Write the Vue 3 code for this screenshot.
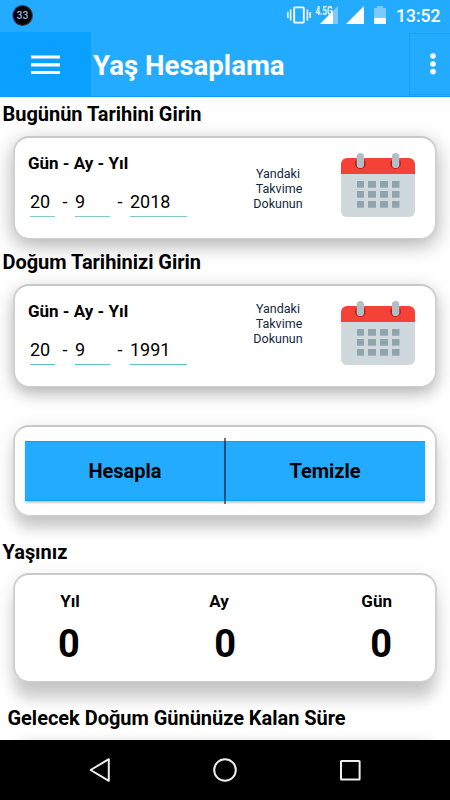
<script setup>
import { ref } from 'vue'

const dates = ref([
  { title: 'Bugünün Tarihini Girin', day: '20', month: '9', year: '2018', kind: 'today' },
  { title: 'Doğum Tarihinizi Girin', day: '20', month: '9', year: '1991', kind: 'birth' },
])

const age = ref([
  { label: 'Yıl', value: 0 },
  { label: 'Ay', value: 0 },
  { label: 'Gün', value: 0 },
])

const cols = [{ x: 16, w: 7 }, { x: 27, w: 8 }, { x: 39, w: 8 }, { x: 51, w: 7.5 }]
const rows = [28, 38, 48]

function clearAge() {
  age.value.forEach((a) => { a.value = 0 })
}
</script>

<template>
  <div class="screen">
    <header class="status">
      <span class="badge">33</span>
      <svg class="status-icons" width="104" height="30" viewBox="0 0 104 30">
        <!-- vibrate -->
        <rect x="8.2" y="7.3" width="9.6" height="15.4" rx="1" fill="none" stroke="#fff" stroke-width="1.8" />
        <path d="M4.6 9.5v11M1.8 12v6M21.4 9.5v11M24.2 12v6" stroke="#fff" stroke-width="1.6" />
        <!-- mobile signal -->
        <path d="M34 24L52 6v18z" fill="#7accff" />
        <path d="M34 24L47 11v13z" fill="#fff" />
        <text x="29.5" y="14.5" class="net" textLength="17" lengthAdjust="spacingAndGlyphs">4.5G</text>
        <path d="M60 24L78 6v18z" fill="#fff" />
        <!-- battery -->
        <path d="M88 8h3V6h6v2h3v10H88z" fill="#7accff" />
        <path d="M88 18h12v6H88z" fill="#fff" />
      </svg>
      <span class="clock">13:52</span>
    </header>

    <div class="toolbar">
      <button class="menu">
        <svg width="29" height="20" viewBox="0 0 29 20">
          <path d="M0 2h29M0 9.8h29M0 17.5h29" stroke="#fff" stroke-width="3.2" />
        </svg>
      </button>
      <h1>Yaş Hesaplama</h1>
      <button class="more">
        <svg width="6" height="22" viewBox="0 0 6 22" fill="#fff">
          <circle cx="3" cy="3" r="2.8" />
          <circle cx="3" cy="11" r="2.8" />
          <circle cx="3" cy="18.6" r="2.8" />
        </svg>
      </button>
    </div>

    <main class="content">
      <section v-for="d in dates" :key="d.kind" class="date-section" :class="d.kind">
        <h2>{{ d.title }}</h2>
        <div class="card date-card">
          <div class="fields">
            <h3>Gün - Ay - Yıl</h3>
            <div class="inputs">
              <span class="field day">{{ d.day }}</span>
              <span class="dash">-</span>
              <span class="field month">{{ d.month }}</span>
              <span class="dash">-</span>
              <span class="field year">{{ d.year }}</span>
            </div>
          </div>
          <p class="hint">Yandaki<br><span class="nudge">Takvime</span><br>Dokunun</p>
          <svg class="calendar" width="74" height="64" viewBox="0 0 74 64">
            <path d="M0 21h74v37a6 6 0 0 1-6 6H6a6 6 0 0 1-6-6z" fill="#cfd8dc" />
            <path d="M0 21V11a6 6 0 0 1 6-6h62a6 6 0 0 1 6 6v10z" fill="#f44336" />
            <circle cx="19.3" cy="10.5" r="5.4" fill="#b71c1c" />
            <circle cx="54.6" cy="10.5" r="5.4" fill="#b71c1c" />
            <rect x="15.7" y="0" width="7.3" height="15" rx="3.6" fill="#b0bec5" />
            <rect x="51" y="0" width="7.3" height="15" rx="3.6" fill="#b0bec5" />
            <template v-for="y in rows" :key="y">
              <rect v-for="c in cols" :key="c.x" :x="c.x" :y="y" :width="c.w" height="6.7" fill="#90a4ae" />
            </template>
          </svg>
        </div>
      </section>

      <div class="card actions">
        <button>Hesapla</button>
        <i class="divider"></i>
        <button @click="clearAge">Temizle</button>
      </div>

      <h2 class="age-title">Yaşınız</h2>
      <div class="card age-card">
        <div v-for="a in age" :key="a.label" class="age-col">
          <span class="age-label">{{ a.label }}</span>
          <span class="age-value">{{ a.value }}</span>
        </div>
      </div>

      <h2 class="next-title">Gelecek Doğum Gününüze Kalan Süre</h2>
      <div class="card next-card"></div>
    </main>

    <nav class="navbar">
      <svg width="24" height="26" viewBox="0 0 24 26"><path d="M20.8 2.2v21.6L2.6 13z" /></svg>
      <svg width="26" height="26" viewBox="0 0 26 26"><circle cx="13" cy="13" r="10.8" /></svg>
      <svg width="24" height="26" viewBox="0 0 24 26"><rect x="3" y="4" width="18.6" height="18.6" rx=".5" /></svg>
    </nav>
  </div>
</template>

<style>
body { margin: 0; overflow: hidden; }
</style>

<style scoped>
* { box-sizing: border-box; }
h1, h2, h3, p { margin: 0; }
svg { display: block; flex: none; }
button { border: 0; padding: 0; font: inherit; color: inherit; }

.screen {
  width: 450px;
  height: 800px;
  display: flex;
  flex-direction: column;
  overflow: hidden;
  background: #fff;
  color: #000;
  font-family: Roboto, sans-serif;
}

/* status bar */
.status {
  flex: none;
  height: 32px;
  display: flex;
  align-items: flex-start;
  padding-left: 12px;
  background: #23acff;
  color: #fff;
}
.badge {
  width: 21px;
  height: 21px;
  margin-top: 4.5px;
  border-radius: 50%;
  border: 1px solid #38495a;
  border-left-color: #3b6bea;
  background: #000;
  color: #8fb0dc;
  font-size: 10.5px;
  font-weight: 500;
  line-height: 19px;
  text-align: center;
}
.status-icons { margin-left: 253px; }
.net { font-size: 12.5px; font-weight: 500; fill: #fff; }
.clock {
  margin: 5px 0 0 6px;
  font-size: 17.5px;
  font-weight: 500;
  line-height: 22px;
}

/* toolbar */
.toolbar {
  flex: none;
  height: 65px;
  display: flex;
  background: #23acff;
  border-bottom: 1px solid #0a9df8;
  color: #fff;
}
.menu {
  width: 91px;
  padding-top: 1px;
  display: flex;
  align-items: center;
  justify-content: center;
  background: #0aa0ff;
  border-right: 1px solid #189fef;
}
.toolbar h1 {
  flex: 1;
  padding-left: 2px;
  font-size: 27.6px;
  font-weight: 700;
  line-height: 67px;
  white-space: nowrap;
}
.more {
  width: 41px;
  height: 62px;
  margin-top: 1px;
  padding-left: 5px;
  display: flex;
  align-items: center;
  justify-content: center;
  background: none;
  border: 1px solid #1ca0f0;
  border-right: 0;
}

/* content */
.content {
  flex: 1;
  min-height: 0;
  display: flex;
  flex-direction: column;
  overflow: hidden;
}
h2 {
  flex: none;
  position: relative;
  z-index: 1;
  padding-left: 2.5px;
  font-size: 20px;
  font-weight: 700;
  letter-spacing: -.03px;
  line-height: 24px;
  white-space: nowrap;
}
.card {
  margin: 0 13px;
  flex: none;
  background: #fff;
  border: 2px solid #d0d0d0;
  border-top-color: #c8c8c8;
  border-bottom-width: 1px;
  border-radius: 16px;
}
.date-section { flex: none; height: 148px; padding-top: 5px; }
.date-card {
  height: 103px;
  margin-top: 10px;
  display: flex;
  box-shadow: 0 6px 20px rgba(0, 0, 0, .32);
}
.birth .date-card { box-shadow: 0 8px 14px -2px rgba(0, 0, 0, .15), 0 5px 20px rgba(0, 0, 0, .2); }
.fields { width: 214px; padding: 13px 0 0 13px; }
h3 {
  font-size: 17px;
  font-weight: 700;
  line-height: 24px;
  white-space: nowrap;
}
.inputs {
  display: flex;
  margin: 15px 0 0 2px;
  font-size: 18px;
  line-height: 24px;
}
.field {
  height: 27px;
  border-bottom: 1px solid #80cbc4;
}
.birth .field { border-color: #5ac4bc; }
.day { width: 25px; }
.month { width: 35px; }
.year { width: 57px; }
.dash { width: 20px; text-align: center; }
.hint {
  width: 98px;
  margin: 27.5px 2px 0 0;
  color: #13293d;
  font-size: 12.5px;
  line-height: 15px;
  text-align: center;
}
.birth .hint { margin-top: 14.5px; }
.nudge { padding-left: 2px; }
.calendar { margin: 15px 0 0 12px; }

/* buttons */
.actions {
  height: 91px;
  margin-top: 32px;
  padding: 0 10px;
  display: flex;
  align-items: center;
  box-shadow: 0 15px 14px -2px rgba(0, 0, 0, .15), 0 5px 20px rgba(0, 0, 0, .13);
}
.actions button {
  flex: 1;
  height: 60px;
  background: #23acff;
  border: solid #0fa0f8;
  border-width: 1px 0;
  box-shadow: 0 2px 2px rgba(0, 0, 0, .22);
  font-size: 20px;
  font-weight: 700;
}
.divider {
  width: 2px;
  height: 66px;
  margin: 0 -1px;
  background: rgba(8, 32, 50, .6);
  z-index: 1;
}

/* age */
.age-title { margin-top: 24px; }
.age-card {
  height: 109px;
  margin-top: 9px;
  padding: 14px 43px 0;
  display: flex;
  justify-content: space-between;
  box-shadow: 0 20px 14px -2px rgba(0, 0, 0, .15), 0 6px 20px rgba(0, 0, 0, .13);
}
.age-col {
  display: flex;
  flex-direction: column;
  align-items: flex-end;
}
.age-col:nth-child(2) {
  align-items: flex-start;
  padding-left: 4px;
}
.age-col:nth-child(2) .age-value { margin-left: 5px; }
.age-label {
  font-size: 17px;
  font-weight: 700;
  line-height: 24px;
}
.age-value {
  margin-top: 11px;
  font-size: 38px;
  font-weight: 700;
  line-height: 40px;
}
.next-title { margin-top: 24px; padding-left: 7.5px; }
.next-card {
  height: 100px;
  margin-top: 12px;
  box-shadow: 0 5px 16px rgba(0, 0, 0, .35);
}

/* navigation bar */
.navbar {
  flex: none;
  height: 60px;
  display: flex;
  align-items: center;
  justify-content: space-between;
  padding: 0 88px;
  background: #000;
  position: relative;
  z-index: 2;
}
.navbar svg {
  fill: none;
  stroke: #eee;
  stroke-width: 2;
  stroke-linejoin: round;
}
</style>
